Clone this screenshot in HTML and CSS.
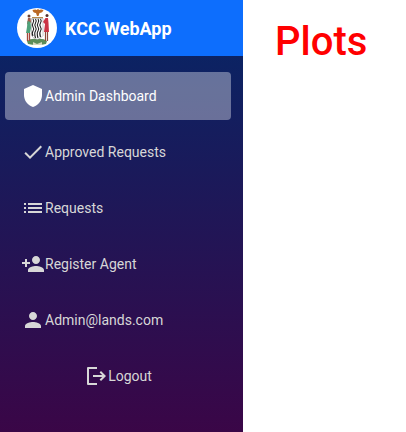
FILE: index.html
```
<!DOCTYPE html>
<html lang="en">
<head>
<meta charset="utf-8">
<meta name="viewport" content="width=device-width, initial-scale=1">
<title>KCC WebApp</title>
<link rel="stylesheet" href="styles.css">
</head>
<body>
<div class="page">
  <aside class="sidebar">
    <header class="brand">
      <svg class="crest" viewBox="0 0 40 40" aria-hidden="true">
        <circle cx="20" cy="20" r="20" fill="#fff"/>
        <path d="M10 33q4-3 10-2q6-1 10 2l-1 3q-4 1-9 1t-9-1z" fill="#5d8d58"/>
        <path d="M16 34l4 2 5-2v3h-9z" fill="#d8d9bd"/>
        <path d="M14.500 10.500h11.500v17q-2 3-5.700 4q-4-1-5.800-4z" fill="#fff" stroke="#888" stroke-width=".5"/>
        <path d="M16 11q1.500 2 0 4t0 4 0 4 0 5M18.500 11q1.500 2 0 4t0 4 0 4 0 7M21 11q1.500 2 0 4t0 4 0 4 0 7M23.500 11q1.500 2 0 4t0 4 0 4 0 6" fill="none" stroke="#1d1d1d" stroke-width="1.100"/>
        <path d="M15.500 2q3-1 4.500 0q1-2 2 0q2-1 4.500 0q-1 3-4 3l-1 3h-1.500l-1-3q-3 0-3.500-3z" fill="#bb6a25"/>
        <path d="M15 9.500h11" stroke="#b58b50" stroke-width="1"/>
        <circle cx="12" cy="8" r="1.500" fill="#6b4031"/>
        <path d="M11 10h2.500l.5 4-2 3-2-1z" fill="#a35b49"/>
        <path d="M10.500 13l3 1 .5 6-1 5H9l1-6z" fill="#4fa27b"/>
        <path d="M10.500 25v8M12.500 25v8" stroke="#a5483c" stroke-width="1.300"/>
        <circle cx="30" cy="7.500" r="1.500" fill="#53302a"/>
        <path d="M28.500 10h2.500l.5 5 .5 9h-5l1-8-2-2z" fill="#cb3446"/>
        <path d="M28.500 24v9M30.500 24v9" stroke="#8c4a3b" stroke-width="1.200"/>
      </svg>
      <a class="brand-name" href="#">KCC WebApp</a>
    </header>
    <nav class="menu">
      <a class="item active" href="#" aria-current="page">
        <svg class="icon" viewBox="0 0 24 24"><path d="M12 1L3 5v6c0 5.550 3.840 10.740 9 12 5.160-1.260 9-6.450 9-12V5z"/></svg>Admin Dashboard</a>
      <a class="item" href="#">
        <svg class="icon" viewBox="0 0 24 24"><path d="M9 16.170L4.830 12l-1.420 1.410L9 19 21 7l-1.410-1.410z"/></svg>Approved Requests</a>
      <a class="item" href="#">
        <svg class="icon" viewBox="0 0 24 24"><path d="M3 13h2v-2H3zm0 4h2v-2H3zm0-8h2V7H3zm4 4h14v-2H7zm0 4h14v-2H7zM7 7v2h14V7z"/></svg>Requests</a>
      <a class="item" href="#">
        <svg class="icon" viewBox="0 0 24 24"><path d="M15 12c2.210 0 4-1.790 4-4s-1.790-4-4-4-4 1.790-4 4 1.790 4 4 4zm-9-2V7H4v3H1v2h3v3h2v-3h3v-2zm9 4c-2.670 0-8 1.340-8 4v2h16v-2c0-2.660-5.330-4-8-4z"/></svg>Register Agent</a>
      <a class="item" href="#">
        <svg class="icon" viewBox="0 0 24 24"><path d="M12 12c2.210 0 4-1.790 4-4s-1.790-4-4-4-4 1.790-4 4 1.790 4 4 4zm0 2c-2.670 0-8 1.340-8 4v2h16v-2c0-2.660-5.330-4-8-4z"/></svg>Admin@lands.com</a>
      <button class="item logout" type="button">
        <svg class="icon" viewBox="0 0 24 24"><path d="M4 3h9v2H5v14h8v2H4q-1 0-1-1V4q0-1 1-1zM17 7l5 5-5 5-1.400-1.400 2.600-2.600H9v-2h9.200l-2.600-2.600z"/></svg>Logout</button>
    </nav>
  </aside>
  <main class="content">
    <h1>Plots</h1>
  </main>
</div>
</body>
</html>
```
FILE: styles.css
```
* {
  box-sizing: border-box;
}

body {
  margin: 0;
  background: #fff;
  font-family: Roboto, "Liberation Sans", sans-serif;
}

.page {
  display: flex;
  min-height: 100vh;
}

.sidebar {
  flex: 0 0 243px;
  background: linear-gradient(180deg, #052767 0%, #3a0647 100%);
}

.brand {
  display: flex;
  align-items: center;
  gap: 8px;
  height: 56px;
  padding-left: 17px;
  background: #0d6efd;
}

.crest {
  width: 40px;
  height: 40px;
}

.brand-name {
  color: #fff;
  font-size: 18px;
  font-weight: 700;
  text-decoration: none;
}

.menu {
  display: flex;
  flex-direction: column;
  gap: 8px;
  padding: 16px 12px 16px 5px;
}

.item {
  display: flex;
  align-items: center;
  height: 48px;
  padding: 0 16px;
  border: 0;
  border-radius: 4px;
  background: none;
  color: #d7d7d7;
  font: inherit;
  font-size: 14px;
  text-decoration: none;
  white-space: nowrap;
}

.item.active {
  background: rgba(255, 255, 255, 0.37);
  color: #fff;
}

.logout {
  justify-content: center;
}

.icon {
  flex: none;
  width: 24px;
  height: 24px;
  fill: currentColor;
}

.content {
  flex: 1;
  padding: 18px 32px;
}

h1 {
  margin: 0;
  color: #f00;
  font-size: 40px;
  font-weight: 500;
  line-height: 48px;
}
```
